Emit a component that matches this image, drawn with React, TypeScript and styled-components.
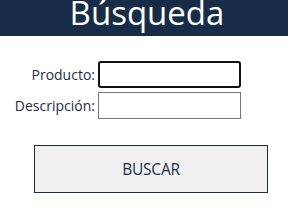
import React from 'react';
import styled, { createGlobalStyle } from 'styled-components';

const GlobalStyle = createGlobalStyle`
  body {
    margin: 0;
    background: #ffffff;
    font-family: 'Open Sans', 'Noto Sans', sans-serif;
  }
`;

const Header = styled.header`
  height: 36px;
  background: #172c46;
  overflow: hidden;
  display: flex;
  justify-content: center;
`;

const Title = styled.h1`
  margin: -9px 0 0 6px;
  font-size: 33px;
  font-weight: 400;
  line-height: 44px;
  color: #ffffff;
  letter-spacing: 0;
`;

const Form = styled.form`
  padding-top: 25px;
`;

const Fields = styled.div`
  display: grid;
  grid-template-columns: 95px 143px;
  column-gap: 3px;
  row-gap: 4px;
  align-items: center;
`;

const Label = styled.label`
  text-align: right;
  font-size: 14px;
  color: #1b2e46;
  white-space: nowrap;
`;

const Input = styled.input<{ $focused?: boolean }>`
  box-sizing: border-box;
  width: 143px;
  height: 27px;
  margin: 0;
  border: ${(p) => (p.$focused ? '2px solid #111111' : '1px solid #767676')};
  border-radius: ${(p) => (p.$focused ? '3px' : '0')};
  outline: none;
  background: #ffffff;
`;

const Button = styled.button`
  display: block;
  box-sizing: border-box;
  width: 234px;
  height: 48px;
  margin: 26px 0 0 34px;
  border: 1px solid #172c46;
  background: #f0f0f0;
  color: #1b2e46;
  font-family: 'Open Sans', 'Noto Sans', sans-serif;
  font-size: 15.5px;
  letter-spacing: -0.2px;
`;

const App = () => {
  return (
    <>
      <GlobalStyle />
      <Header>
        <Title>Búsqueda</Title>
      </Header>
      <Form onSubmit={(e) => e.preventDefault()}>
        <Fields>
          <Label htmlFor="producto">Producto:</Label>
          <Input id="producto" $focused />
          <Label htmlFor="descripcion">Descripción:</Label>
          <Input id="descripcion" />
        </Fields>
        <Button type="submit">BUSCAR</Button>
      </Form>
    </>
  );
};

export default App;
